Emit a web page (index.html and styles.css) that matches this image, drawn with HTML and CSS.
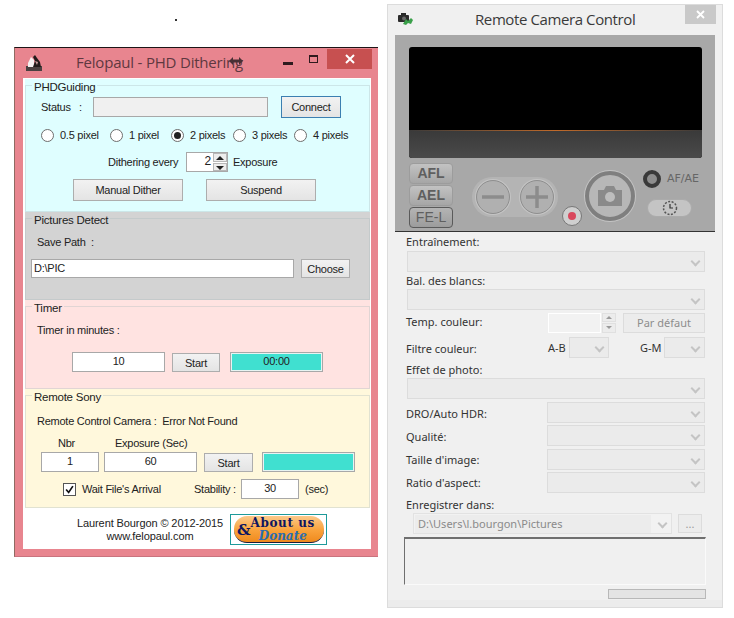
FILE: index.html
```html
<!DOCTYPE html>
<html lang="en">
<head>
<meta charset="utf-8">
<title>Felopaul - PHD Dithering</title>
<link rel="stylesheet" href="styles.css">
</head>
<body>
<span class="speck"></span>

<main class="win-phd">
  <header class="phd-title">
    <svg class="phd-icon" viewBox="0 0 16 16" width="16" height="16"><rect x="0" y="11" width="16" height="5" fill="#4a4040"/><path d="M2 12 L2 8 L5 2 L8 5 L8 12 Z" fill="#f4f0f0"/><path d="M7 12 L9 6 L7 2 L9 0 L11 3 L14 7 L15 12 Z" fill="#221a1a"/><path d="M9 6 L12 7 L11 10 Z" fill="#c9a0a0"/></svg>
    <h1 class="phd-name">Felopaul - PHD Dithering</h1>
    <svg class="cursor" viewBox="0 0 14 8" width="14" height="8"><path d="M0 4 L4 0 V2.500 H10 V0 L14 4 L10 8 V5.500 H4 V8 Z" fill="#4a3035"/></svg>
    <span class="min"></span>
    <span class="max"></span>
    <span class="close"><svg viewBox="0 0 10 10" width="10" height="10"><path d="M1 1 L9 9 M9 1 L1 9" stroke="#fff" stroke-width="2"/></svg></span>
  </header>
  <div class="client">
    <section class="group g-phd">
      <fieldset>
        <legend>PHDGuiding</legend>
        <div class="row r-status">
          <span class="status-label">Status&nbsp;&nbsp; :</span>
          <div class="field status-field"></div>
          <button class="btn btn-focus">Connect</button>
        </div>
        <div class="row r-radios">
          <span class="radio-item w69"><i class="radio"></i>0.5 pixel</span>
          <span class="radio-item w61"><i class="radio"></i>1 pixel</span>
          <span class="radio-item w62"><i class="radio on"></i>2 pixels</span>
          <span class="radio-item w61"><i class="radio"></i>3 pixels</span>
          <span class="radio-item"><i class="radio"></i>4 pixels</span>
        </div>
        <div class="row r-spin">
          <span class="dith-label">Dithering every</span>
          <div class="field spin"><span class="spin-val">2</span><span class="arrows"><i class="up"></i><i class="down"></i></span></div>
          <span>Exposure</span>
        </div>
        <div class="row r-actions">
          <button class="btn w110">Manual Dither</button>
          <button class="btn w110">Suspend</button>
        </div>
      </fieldset>
    </section>

    <section class="group g-pic">
      <fieldset>
        <legend>Pictures Detect</legend>
        <div class="row r-savelabel">Save Path&nbsp; :</div>
        <div class="row r-path">
          <div class="field path-field">D:\PIC</div>
          <button class="btn choose">Choose</button>
        </div>
      </fieldset>
    </section>

    <section class="group g-timer">
      <fieldset>
        <legend>Timer</legend>
        <div class="row r-timerlabel">Timer in minutes :</div>
        <div class="row r-timer">
          <div class="field center w93">10</div>
          <button class="btn start">Start</button>
          <div class="field center teal w93">00:00</div>
        </div>
      </fieldset>
    </section>

    <section class="group g-remote">
      <fieldset>
        <legend>Remote Sony</legend>
        <div class="row r-remotelabel">Remote Control Camera :&nbsp; Error Not Found</div>
        <div class="row r-heads"><span class="head-nbr">Nbr</span><span>Exposure (Sec)</span></div>
        <div class="row r-shots">
          <div class="field center w58">1</div>
          <div class="field center w93 shot-exp">60</div>
          <button class="btn start shot-start">Start</button>
          <div class="field teal w93"></div>
        </div>
        <div class="row r-wait">
          <span class="check"><svg viewBox="0 0 13 13" width="11" height="11"><path d="M2.500 6.500 L5.500 10 L10.500 2.500" fill="none" stroke="#111" stroke-width="2"/></svg></span>
          <span class="wait-label">Wait File's Arrival</span>
          <span class="stab-label">Stability :</span>
          <div class="field center w58">30</div>
          <span class="sec">(sec)</span>
        </div>
      </fieldset>
    </section>

    <footer class="credits">
      <div class="credit-text">Laurent Bourgon © 2012-2015<br>www.felopaul.com</div>
      <div class="about">
        <div class="about-pill">
          <span class="amp">&amp;</span>
          <span class="about-lines"><b class="about-us">About us</b><b class="donate">Donate</b></span>
        </div>
      </div>
    </footer>
  </div>
</main>

<main class="win-cam">
  <header class="cam-title">
    <svg class="cam-icon" viewBox="0 0 15 12" width="15" height="12"><rect x="0" y="2" width="11" height="7" rx="1" fill="#2b2b2b"/><rect x="3" y="0" width="5" height="3" fill="#2b2b2b"/><circle cx="6" cy="5.500" r="2" fill="#6a6a6a"/><path d="M5 11 L8 6 L10 8 L13 5 L15 7 L13 11 L10 10 L8 12 Z" fill="#3aa04a"/></svg>
    <h2 class="cam-name">Remote Camera Control</h2>
    <span class="cam-close"><svg viewBox="0 0 9 9" width="9" height="9"><path d="M1 1 L8 8 M8 1 L1 8" stroke="#fff" stroke-width="1.800"/></svg></span>
  </header>
  <div class="panel">
    <div class="preview"><div class="preview-low"></div></div>
    <div class="controls">
      <div class="lock-col">
        <span class="lock">AFL</span>
        <span class="lock">AEL</span>
        <span class="lock lock-on">FE-L</span>
      </div>
      <div class="zoom-pill">
        <span class="zoom-btn"><svg viewBox="0 0 24 24" width="24" height="24"><path d="M1 12 H23" stroke="#8c8c8c" stroke-width="3.500"/></svg></span>
        <span class="zoom-btn"><svg viewBox="0 0 24 24" width="24" height="24"><path d="M1 12 H23 M12 1 V23" stroke="#8c8c8c" stroke-width="3.500"/></svg></span>
      </div>
      <span class="rec"><i class="rec-dot"></i></span>
      <span class="shutter"><svg viewBox="0 0 24 20" width="24" height="20"><path d="M0 4 H6 L8 0 H16 L18 4 H24 V20 H0 Z" fill="#8a8a8a"/><circle cx="12" cy="11" r="5" fill="#bdbdbd"/></svg></span>
      <div class="af-col">
        <div class="af-row"><span class="af-ring"></span><span class="af-text">AF/AE</span></div>
        <span class="timer-pill"><svg viewBox="0 0 16 16" width="16" height="16"><circle cx="8" cy="8" r="6.500" fill="none" stroke="#555" stroke-width="1.500" stroke-dasharray="2 1.500"/><path d="M8 4 V8 H11" fill="none" stroke="#333" stroke-width="1.200"/></svg></span>
      </div>
    </div>
  </div>
  <div class="form">
    <div class="lbl l-first">Entraînement:</div>
    <div class="sel s-first"></div>
    <div class="lbl l-bal">Bal. des blancs:</div>
    <div class="sel s-bal"></div>
    <div class="frow f-temp">
      <span class="flabel fl-high">Temp. couleur:</span>
      <div class="temp-field"></div>
      <span class="temp-spin"><i class="up-d"></i><i class="down-d"></i></span>
      <span class="default-btn">Par défaut</span>
    </div>
    <div class="frow f-filter">
      <span class="flabel fl-low">Filtre couleur:</span>
      <span class="ab">A-B</span>
      <div class="sel s-ab"></div>
      <span class="gm">G-M</span>
      <div class="sel s-gm"></div>
    </div>
    <div class="lbl l-effect">Effet de photo:</div>
    <div class="sel s-effect"></div>
    <div class="frow f-wide f-dro"><span class="flabel fl-low">DRO/Auto HDR:</span><div class="sel s-wide"></div></div>
    <div class="frow f-wide"><span class="flabel fl-low">Qualité:</span><div class="sel s-wide"></div></div>
    <div class="frow f-wide f-size"><span class="flabel">Taille d'image:</span><div class="sel s-wide"></div></div>
    <div class="frow f-wide"><span class="flabel">Ratio d'aspect:</span><div class="sel s-wide"></div></div>
    <div class="lbl l-save">Enregistrer dans:</div>
    <div class="save-row">
      <div class="sel s-save"><span class="save-text">D:\Users\l.bourgon\Pictures</span></div>
      <span class="dots">...</span>
    </div>
    <div class="log"></div>
    <div class="progress"></div>
  </div>
</main>
</body>
</html>
```

FILE: styles.css
```css
* { box-sizing: border-box; }
html, body { margin: 0; height: 100%; }
body {
  position: relative;
  width: 734px;
  height: 618px;
  overflow: hidden;
  background: #fff;
  font: 11px/14px "Liberation Sans", Arial, sans-serif;
  letter-spacing: -0.25px;
  color: #222;
}
button { font: inherit; color: inherit; padding: 0; letter-spacing: inherit; }
h1, h2 { margin: 0; font-weight: 400; }
i { display: block; }

.speck { position: absolute; left: 175px; top: 19px; width: 2px; height: 2px; background: #333; }

/* ---------- left window ---------- */
.win-phd {
  position: absolute;
  left: 14px;
  top: 47px;
  width: 364px;
  height: 510px;
  background: #e8858f;
  border-top: 1px solid #1d1416;
  border-left: 1px solid #8f6a62;
  border-bottom: 1px solid #c9737e;
  display: flex;
  flex-direction: column;
}
.phd-title {
  position: relative;
  height: 30px;
  flex: none;
  display: flex;
}
.phd-icon { position: absolute; left: 11px; top: 7px; }
.phd-name {
  position: absolute;
  left: 61px;
  top: 3px;
  font: 15px/22px "Open Sans", sans-serif;
  letter-spacing: -0.2px;
  color: #5f3840;
  white-space: nowrap;
}
.cursor { position: absolute; left: 214px; top: 9px; }
.min { position: absolute; left: 268px; top: 14px; width: 10px; height: 3px; background: #2f1a1e; }
.max { position: absolute; left: 294px; top: 7px; width: 9px; height: 8px; border: 1px solid #2f1a1e; border-top-width: 2px; }
.close {
  position: absolute;
  left: 312px;
  top: 1px;
  width: 45px;
  height: 20px;
  background: #c75050;
  display: flex;
  align-items: center;
  justify-content: center;
}
.client {
  flex: none;
  width: 348px;
  height: 471px;
  margin-left: 8px;
  background: #fff;
  padding: 1px 1px 0 2px;
  display: flex;
  flex-direction: column;
}
.group { flex: none; }
.g-phd { height: 133px; background: #dffeff; }
.g-pic { height: 88px; background: #d3d3d3; }
.g-timer { height: 89px; background: #ffe3e1; }
.g-remote { height: 119px; background: #fff8dc; }
fieldset {
  margin: 0;
  padding: 0;
  min-width: 0;
  height: 100%;
  border: 1px solid rgba(170, 185, 190, 0.35);
}
legend {
  margin-left: 6px;
  padding: 0 2px;
  height: 13px;
  line-height: 17px;
  font-size: 11.500px;
  color: #222;
}
.row { display: flex; align-items: center; white-space: nowrap; }

.field {
  height: 20px;
  background: #fff;
  border: 1px solid #a8a8a8;
  line-height: 17px;
  flex: none;
}
.center { text-align: center; }
.teal { background: #40e0d0; box-shadow: inset 0 0 0 1px #e8f4f2; }
.w93 { width: 93px; }
.w58 { width: 58px; }
.w110 { width: 110px; }
.btn {
  flex: none;
  height: 22px;
  background: linear-gradient(#f2f2f2, #e4e4e4);
  border: 1px solid #adadad;
  border-radius: 0;
}
.btn-focus { width: 60px; border-color: #3c7fb1; }

.r-status { height: 22px; margin-top: 4px; padding-left: 15px; }
.status-label { width: 52px; flex: none; }
.status-field { width: 175px; background: #f0f0f0; margin-right: 13px; }
.r-radios { height: 16px; margin-top: 9px; padding-left: 15px; }
.radio-item { display: flex; align-items: center; gap: 6px; flex: none; }
.w69 { width: 69px; }
.w61 { width: 61px; }
.w62 { width: 62px; }
.radio {
  width: 13px;
  height: 13px;
  border: 1px solid #6e6e6e;
  border-radius: 50%;
  background: #fff;
  flex: none;
  display: flex;
  align-items: center;
  justify-content: center;
}
.radio.on::after { content: ""; width: 7px; height: 7px; border-radius: 50%; background: #222; }
.r-spin { height: 20px; margin-top: 9px; padding-left: 82px; }
.dith-label { width: 78px; flex: none; }
.spin { width: 42px; display: flex; justify-content: flex-end; margin-right: 5px; }
.spin-val { padding-right: 2px; font-size: 12px; }
.arrows { width: 14px; display: flex; flex-direction: column; gap: 1px; padding: 0; }
.arrows i { flex: 1; background: #ededed; border: 1px solid #b8b8b8; position: relative; }
.up::after, .down::after {
  content: "";
  position: absolute;
  left: 2px;
  border-left: 4px solid transparent;
  border-right: 4px solid transparent;
}
.up::after { top: 2px; border-bottom: 4px solid #222; }
.down::after { top: 2px; border-top: 4px solid #222; }
.r-actions { height: 22px; margin-top: 7px; padding-left: 47px; gap: 23px; }

.r-savelabel { height: 14px; margin-top: 10px; padding-left: 11px; }
.r-path { height: 19px; margin-top: 10px; padding-left: 5px; gap: 7px; }
.path-field { width: 263px; height: 19px; padding-left: 2px; line-height: 16px; }
.choose { width: 49px; height: 19px; }

.r-timerlabel { height: 14px; margin-top: 10px; padding-left: 11px; }
.r-timer { height: 20px; margin-top: 15px; padding-left: 46px; }
.start { width: 48px; height: 19px; margin: 1px 10px 0 7px; }

.r-remotelabel { height: 14px; margin-top: 12px; padding-left: 11px; }
.r-heads { height: 14px; margin-top: 8px; padding-left: 32px; }
.head-nbr { width: 57px; flex: none; }
.r-shots { height: 20px; margin-top: 2px; padding-left: 15px; }
.shot-exp { margin-left: 5px; }
.shot-start { width: 49px; margin-right: 9px; }
.r-wait { height: 20px; margin-top: 7px; padding-left: 37px; }
.check {
  width: 13px;
  height: 13px;
  background: #fff;
  border: 1px solid #555;
  flex: none;
  display: flex;
  align-items: center;
  justify-content: center;
  margin-right: 6px;
}
.wait-label { width: 112px; flex: none; }
.stab-label { width: 47px; flex: none; }
.sec { margin-left: 6px; }

.credits { flex: none; display: flex; padding-top: 6px; }
.credit-text {
  width: 146px;
  margin: 3px 7px 0 52px;
  line-height: 13px;
  text-align: center;
  white-space: nowrap;
  letter-spacing: -0.1px;
}
.about {
  width: 97px;
  height: 31px;
  border: 1px solid #1d9a9a;
  padding: 1px 2px 1px 3px;
}
.about-pill {
  height: 100%;
  border-radius: 13px;
  background: linear-gradient(#fbc98a, #f9a23b 55%, #ef8a1e);
  border-bottom: 1px solid #1c1c3c;
  display: flex;
  align-items: center;
  padding-left: 3px;
  color: #0e1560;
  font-family: "DejaVu Serif", "Liberation Serif", serif;
  font-weight: 700;
  letter-spacing: 0;
  overflow: hidden;
}
.amp { font-size: 15px; margin-top: 1px; }
.about-lines { display: flex; flex-direction: column; align-items: center; margin-top: 1px; }
.about-us { font-size: 12px; line-height: 13px; white-space: nowrap; letter-spacing: 0.600px; }
.donate { font-size: 12px; line-height: 13px; font-style: italic; color: #2a6db0; }

/* ---------- right window ---------- */
.win-cam {
  position: absolute;
  left: 387px;
  top: 4px;
  width: 336px;
  height: 604px;
  background: #f0f0f0;
  border: 1px solid #dcdcdc;
  padding: 0 7px;
  box-shadow: inset 0 -7px 0 #ececec;
  letter-spacing: 0;
}
.cam-title { position: relative; height: 30px; }
.cam-icon { position: absolute; left: 3px; top: 8px; }
.cam-name {
  position: absolute;
  left: 80px;
  top: 3px;
  font: 15px/22px "Open Sans", sans-serif;
  letter-spacing: -0.4px;
  color: #3a3a3a;
  white-space: nowrap;
}
.cam-close {
  position: absolute;
  left: 290px;
  top: 0;
  width: 31px;
  height: 19px;
  background: #c9c9c9;
  display: flex;
  align-items: center;
  justify-content: center;
}
.panel {
  width: 320px;
  height: 197px;
  background: #a8a8a8;
  border-bottom: 1px solid #333;
  padding: 12px 0 0 14px;
}
.preview {
  width: 293px;
  height: 111px;
  border-radius: 3px;
  background: #000;
  display: flex;
  align-items: flex-end;
  overflow: hidden;
}
.preview-low {
  width: 100%;
  height: 28px;
  background: linear-gradient(#3a3a3a, #4a4a4a);
  border-top: 1px solid;
  border-image: linear-gradient(90deg, #3a3a3a, #c06a2a 50%, #3a3a3a) 1;
}
.controls { display: flex; margin-top: 5px; align-items: flex-start; }
.lock-col { width: 44px; display: flex; flex-direction: column; gap: 1px; }
.lock {
  height: 21px;
  border-radius: 4px;
  border: 1px solid #9c9c9c;
  background: linear-gradient(#c2c2c2, #a6a6a6);
  color: #5f5f5f;
  font: 700 14px/19px "Liberation Sans", sans-serif;
  text-align: center;
}
.lock-on { border-color: #5a5a5a; font-weight: 400; background: linear-gradient(#b4b4b4, #9c9c9c); }
.zoom-pill {
  width: 86px;
  height: 40px;
  margin: 14px 0 0 19px;
  border-radius: 20px;
  background: #b4b4b4;
  display: flex;
  align-items: center;
  justify-content: space-between;
  padding: 0 4px;
}
.zoom-btn {
  width: 34px;
  height: 34px;
  border-radius: 50%;
  border: 1px solid #8e8e8e;
  box-shadow: 0 0 0 1px #c4c4c4;
  background: #b0b0b0;
  display: flex;
  align-items: center;
  justify-content: center;
}
.rec {
  width: 20px;
  height: 20px;
  margin: 43px 0 0 4px;
  border-radius: 50%;
  background: #cfcfcf;
  border: 1px solid #777;
  display: flex;
  align-items: center;
  justify-content: center;
  flex: none;
}
.rec-dot { width: 8px; height: 8px; border-radius: 50%; background: #d9475c; }
.shutter {
  width: 50px;
  height: 50px;
  margin: 8px 0 0 3px;
  border-radius: 50%;
  background: #b7b7b7;
  border: 4px solid #7f7f7f;
  box-shadow: 0 0 0 1px #c4c4c4;
  display: flex;
  align-items: center;
  justify-content: center;
  flex: none;
}
.af-col { margin: 7px 0 0 8px; }
.af-row { display: flex; align-items: center; gap: 6px; }
.af-ring {
  width: 18px;
  height: 18px;
  border-radius: 50%;
  border: 4px solid #3a3a3a;
  background: #8e8e8e;
  flex: none;
}
.af-text { color: #666; font: 400 11px/14px "DejaVu Sans", sans-serif; }
.timer-pill {
  width: 45px;
  height: 18px;
  margin: 11px 0 0 4px;
  border-radius: 9px;
  background: #c4c4c4;
  border: 1px solid #ababab;
  display: flex;
  align-items: center;
  justify-content: center;
}

.form { padding-left: 12px; color: #333; font: 11px/14px "Noto Sans", sans-serif; }
.lbl { height: 14px; white-space: nowrap; margin-left: -1px; }
.sel {
  position: relative;
  height: 21px;
  width: 298px;
  background: #ebebeb;
  border: 1px solid #dcdcdc;
  flex: none;
}
.sel::after {
  content: "";
  position: absolute;
  right: 5px;
  top: 6px;
  width: 5px;
  height: 5px;
  border-right: 2px solid #c4c4c4;
  border-bottom: 2px solid #c4c4c4;
  transform: rotate(45deg);
}
.l-first { margin-top: 3px; }
.s-first { margin-top: 2px; }
.l-bal { margin-top: 2px; }
.s-bal { margin-top: 1px; }
.frow { display: flex; align-items: center; white-space: nowrap; height: 21px; }
.flabel { flex: none; margin-left: -1px; }
.fl-low { padding-top: 2px; }
.fl-high { padding-bottom: 2px; }
.f-temp { margin-top: 2px; }
.f-temp .flabel { width: 142px; }
.temp-field { width: 53px; height: 20px; background: #f2f2f2; border: 1px solid #fff; flex: none; }
.temp-spin { width: 14px; height: 20px; margin: 0 7px 0 1px; display: flex; flex-direction: column; gap: 1px; flex: none; }
.temp-spin i { flex: 1; background: #ececec; border: 1px solid #e0e0e0; position: relative; }
.up-d::after, .down-d::after {
  content: "";
  position: absolute;
  left: 3px;
  top: 2px;
  border-left: 3px solid transparent;
  border-right: 3px solid transparent;
}
.up-d::after { border-bottom: 3px solid #9a9a9a; }
.down-d::after { border-top: 3px solid #9a9a9a; }
.default-btn {
  width: 82px;
  height: 20px;
  background: #ececec;
  border: 1px solid #dcdcdc;
  color: #8c8c8c;
  text-align: center;
  line-height: 18px;
  flex: none;
}
.f-filter { margin-top: 4px; }
.f-filter .flabel { width: 142px; }
.ab { width: 21px; flex: none; }
.s-ab, .s-gm { width: 40px; }
.gm { width: 24px; margin-left: 31px; flex: none; }
.s-gm { width: 41px; }
.l-effect { margin-top: 5px; }
.s-effect { margin-top: 1px; }
.f-wide { margin-top: 2px; }
.f-wide .flabel { width: 141px; }
.f-dro { margin-top: 3px; }
.f-size { margin-top: 3px; }
.s-wide { width: 158px; }
.l-save { margin-top: 5px; }
.save-row { display: flex; margin: 1px 0 0 6px; }
.s-save { width: 259px; background: #f2f2f2; border-color: #e2e2e2; color: #8a8a8a; padding: 3px 0 0 4px; }
.save-text { display: block; width: 236px; margin: -2px 0 0 -3px; padding: 2px 0 2px 3px; background: #ececec; }
.dots {
  width: 24px;
  height: 19px;
  margin: 1px 0 0 6px;
  background: #ececec;
  border: 1px solid #dcdcdc;
  color: #9a9a9a;
  text-align: center;
  line-height: 18px;
}
.log {
  width: 302px;
  height: 48px;
  margin: 3px 0 0 -3px;
  background: #f0f0f0;
  border-top: 2px solid #6f6f6f;
  border-left: 1px solid #6f6f6f;
  border-right: 1px solid #fafafa;
  border-bottom: 1px solid #fafafa;
}
.progress {
  width: 98px;
  height: 10px;
  margin: 4px 0 0 201px;
  background: #e4e4e4;
  border: 1px solid #b8b8b8;
}
```
